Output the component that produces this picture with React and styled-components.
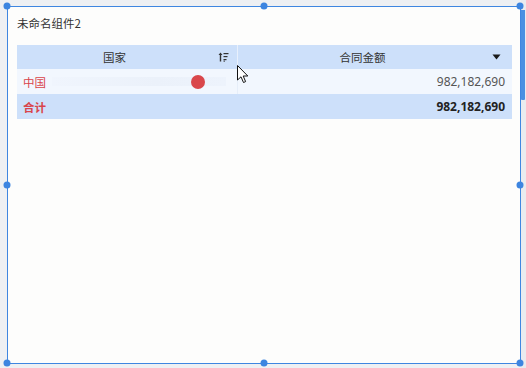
import React from "react";
import styled, { createGlobalStyle } from "styled-components";

const Global = createGlobalStyle`
  html, body { margin: 0; padding: 0; }
  body {
    background: #eef0f3;
    font-family: "Noto Sans", "Noto Sans CJK SC", sans-serif;
    width: 526px;
    height: 368px;
    overflow: hidden;
  }
`;

const Page = styled.div`
  display: grid;
  grid-template-columns: 7px 514px 5px;
  height: 368px;
  box-sizing: border-box;
  padding-top: 6px;
`;

const Frame = styled.div`
  grid-column: 2;
  position: relative;
  height: 358px;
  box-sizing: border-box;
  border: 1px solid #3f86e0;
  background: #fdfdfc;
  padding: 7px 7px 0 9px;
  display: flex;
  flex-direction: column;
`;

const ScrollTrack = styled.div`
  grid-column: 3;
  margin-top: -6px;
  padding-top: 10px;
  background: #e9ebef;
`;

const ScrollThumb = styled.div`
  width: 4px;
  height: 90px;
  background: #4a90e2;
  border-radius: 0 0 1px 1px;
`;

const Handle = styled.span`
  position: absolute;
  width: 7px;
  height: 7px;
  border-radius: 50%;
  background: #3d85e0;
  left: ${(p) => p.$x};
  top: ${(p) => p.$y};
  transform: translate(-50%, -50%);
`;

const Title = styled.div`
  font-family: "Noto Sans CJK SC", sans-serif;
  font-size: 11.5px;
  color: #333;
  height: 18px;
  line-height: 18px;
  margin-bottom: 13px;
`;

const Table = styled.div`
  display: grid;
  grid-template-columns: 220px 275px;
  width: 495px;
`;

const HeadCell = styled.div`
  position: relative;
  height: 24px;
  box-sizing: border-box;
  padding-right: 25px;
  background: #cde0fa;
  display: flex;
  align-items: center;
  justify-content: center;
  font-family: "Noto Sans CJK SC", sans-serif;
  font-size: 11.5px;
  color: #333;
  border-left: ${(p) => (p.$divider ? "1px solid #e8f0fc" : "none")};
`;

const HeadIcon = styled.span`
  position: absolute;
  right: ${(p) => p.$right};
  top: 50%;
  transform: translateY(-50%);
  display: flex;
`;

const Cell = styled.div`
  height: 25px;
  display: flex;
  align-items: center;
  box-sizing: border-box;
  padding: 0 7px 0 6px;
  justify-content: ${(p) => (p.$right ? "flex-end" : "flex-start")};
  background: ${(p) => (p.$total ? "#cde0fa" : "#f2f7fe")};
  border-left: ${(p) => (p.$divider ? "1px solid #e6eef9" : "none")};
  font-family: "Noto Sans", "Noto Sans CJK SC", sans-serif;
  font-size: 12px;
  font-weight: ${(p) => (p.$total ? 700 : 400)};
  color: ${(p) => (p.$red ? "#d9454b" : p.$total ? "#222" : "#555")};
  position: relative;
`;

const Label = styled.span`
  font-family: "Noto Sans CJK SC", sans-serif;
  font-size: 11.5px;
`;

const Track = styled.span`
  flex: 1;
  margin-left: 6px;
  margin-right: 4px;
  height: 9px;
  background: linear-gradient(90deg, #f0f5fd 0%, #ebf1fa 60%, #edf3fc 100%);
  position: relative;
`;

const Dot = styled.span`
  position: absolute;
  left: 139px;
  top: 50%;
  width: 14px;
  height: 14px;
  border-radius: 50%;
  background: #d9474b;
  transform: translateY(-50%);
`;

const Cursor = styled.svg`
  position: absolute;
  left: 229px;
  top: 58px;
`;

const SortIcon = () => (
  <svg width="11" height="10" viewBox="0 0 11 10">
    <path d="M2.5 0.5 L0.5 3 H1.8 V9.5 H3.2 V3 H4.5 Z" fill="#333" />
    <rect x="5.5" y="1" width="5" height="1.2" fill="#333" />
    <rect x="5.5" y="4" width="4" height="1.2" fill="#333" />
    <rect x="5.5" y="7" width="3" height="1.2" fill="#333" />
    <rect x="5.5" y="8.6" width="1.5" height="1" fill="#333" />
  </svg>
);

const Caret = () => (
  <svg width="9" height="6" viewBox="0 0 9 6">
    <path d="M0.5 0.5 H8.5 L4.5 5.5 Z" fill="#1a1a1a" />
  </svg>
);

export default function App() {
  return (
    <>
      <Global />
      <Page>
        <Frame>
          <Handle $x="-1px" $y="-1px" />
          <Handle $x="50%" $y="-1px" />
          <Handle $x="calc(100% + 0px)" $y="-1px" />
          <Handle $x="-1px" $y="50%" />
          <Handle $x="calc(100% + 0px)" $y="50%" />
          <Handle $x="-1px" $y="calc(100% + 0px)" />
          <Handle $x="50%" $y="calc(100% + 0px)" />
          <Handle $x="calc(100% + 0px)" $y="calc(100% + 0px)" />
          <Title>未命名组件2</Title>
          <Table>
            <HeadCell>
              国家
              <HeadIcon $right="8px">
                <SortIcon />
              </HeadIcon>
            </HeadCell>
            <HeadCell $divider>
              合同金额
              <HeadIcon $right="11px">
                <Caret />
              </HeadIcon>
            </HeadCell>
            <Cell $red>
              <Label>中国</Label>
              <Track>
                <Dot />
              </Track>
            </Cell>
            <Cell $right $divider>982,182,690</Cell>
            <Cell $red $total>
              <Label>合计</Label>
            </Cell>
            <Cell $right $total>982,182,690</Cell>
          </Table>
          <Cursor width="12" height="19" viewBox="0 0 12 19">
            <path
              d="M0.5 0.5 V15 L4 11.8 L6.5 17.5 L8.6 16.6 L6.2 11 H10.8 Z"
              fill="#fff"
              stroke="#111"
              strokeWidth="1"
              strokeLinejoin="round"
            />
          </Cursor>
        </Frame>
        <ScrollTrack>
          <ScrollThumb />
        </ScrollTrack>
      </Page>
    </>
  );
}
